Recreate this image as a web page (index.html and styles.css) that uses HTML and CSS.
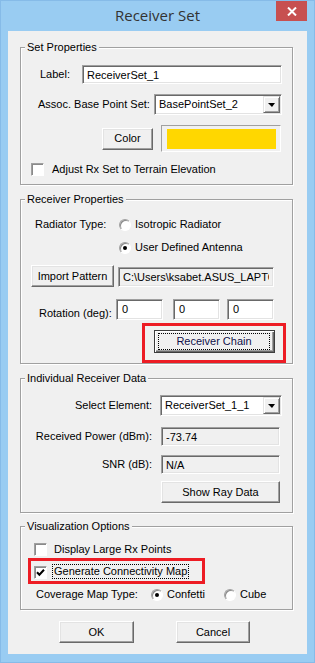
FILE: index.html
```html
<!DOCTYPE html>
<html lang="en">
<head>
<meta charset="UTF-8">
<meta name="viewport" content="width=device-width, initial-scale=1.0">
<title>Receiver Set</title>
<link rel="stylesheet" href="styles.css">
</head>
<body>
  <div class="window">
    <div class="titlebar">
      <span class="title">Receiver Set</span>
      <button class="close" title="Close">
        <svg width="10" height="9" viewBox="0 0 10 9"><path d="M1 0.5 L9 8.5 M9 0.5 L1 8.5" stroke="#fff" stroke-width="2"/></svg>
      </button>
    </div>

    <div class="client">
      <div class="group set-props">
        <div class="legend">Set Properties</div>
        <div class="row label-row">
          <span class="lbl lbl-name">Label:</span>
          <input class="edit name-edit" type="text" value="ReceiverSet_1">
        </div>
        <div class="row base-row">
          <span class="lbl lbl-base">Assoc. Base Point Set:</span>
          <div class="combo base-combo"><span class="combo-text">BasePointSet_2</span><span class="drop"></span></div>
        </div>
        <div class="row color-row">
          <button class="btn color-btn">Color</button>
          <div class="swatch"><div class="swatch-fill"></div></div>
        </div>
        <div class="row check-row terrain-row">
          <span class="check"></span>
          <span class="check-text">Adjust Rx Set to Terrain Elevation</span>
        </div>
      </div>

      <div class="group rx-props">
        <div class="legend">Receiver Properties</div>
        <div class="row radio-row type-row">
          <span class="lbl lbl-type">Radiator Type:</span>
          <span class="radio"></span>
          <span>Isotropic Radiator</span>
        </div>
        <div class="row radio-row user-row">
          <span class="radio on"></span>
          <span>User Defined Antenna</span>
        </div>
        <div class="row import-row">
          <button class="btn import-btn">Import Pattern</button>
          <input class="edit ro path-edit" type="text" value="C:\Users\ksabet.ASUS_LAPTOP\Documents\pattern.uan" readonly>
        </div>
        <div class="row rot-row">
          <span class="lbl lbl-rot">Rotation (deg):</span>
          <textarea class="edit rot-edit">0</textarea>
          <textarea class="edit rot-edit rot-mid">0</textarea>
          <textarea class="edit rot-edit rot-last">0</textarea>
        </div>
        <div class="row chain-row">
          <div class="mark chain-mark">
            <button class="btn default chain-btn"><span class="focus">Receiver Chain</span></button>
          </div>
        </div>
      </div>

      <div class="group rx-data">
        <div class="legend">Individual Receiver Data</div>
        <div class="row data-row sel-row">
          <span class="lbl lbl-right">Select Element:</span>
          <div class="combo elem-combo"><span class="combo-text">ReceiverSet_1_1</span><span class="drop"></span></div>
        </div>
        <div class="row data-row power-row">
          <span class="lbl lbl-right">Received Power (dBm):</span>
          <input class="edit ro data-edit" type="text" value="-73.74" readonly>
        </div>
        <div class="row data-row snr-row">
          <span class="lbl lbl-right">SNR (dB):</span>
          <input class="edit ro data-edit" type="text" value="N/A" readonly>
        </div>
        <div class="row ray-row">
          <button class="btn ray-btn">Show Ray Data</button>
        </div>
      </div>

      <div class="group vis-opts">
        <div class="legend">Visualization Options</div>
        <div class="row check-row large-row">
          <span class="check"></span>
          <span class="check-text">Display Large Rx Points</span>
        </div>
        <div class="row conn-mark">
          <span class="check on">
            <svg width="9" height="9" viewBox="0 0 9 9"><path d="M1 4.2 L3.4 6.8 L8 1.8" fill="none" stroke="#000" stroke-width="2"/></svg>
          </span>
          <span class="check-text focus-text">Generate Connectivity Map</span>
        </div>
        <div class="row radio-row map-row">
          <span class="lbl lbl-map">Coverage Map Type:</span>
          <span class="opt opt-confetti"><span class="radio on"></span><span>Confetti</span></span>
          <span class="opt"><span class="radio"></span><span>Cube</span></span>
        </div>
      </div>

      <div class="row actions">
        <button class="btn ok-btn">OK</button>
        <button class="btn cancel-btn">Cancel</button>
      </div>
    </div>
  </div>
</body>
</html>
```

FILE: styles.css
```css
body {
  margin: 0;
  font-family: "Liberation Sans", Arial, sans-serif;
  font-size: 11px;
  line-height: 13px;
  color: #000;
}
.window {
  width: 315px;
  height: 663px;
  box-sizing: border-box;
  padding: 0 8px 9px;
  background: #99ccf2;
  box-shadow: inset 0 0 0 1px #86bbe8;
  display: flex;
  flex-direction: column;
}
.titlebar {
  height: 31px;
  margin: 0 -8px;
  display: grid;
  grid-template-columns: 1fr auto 1fr;
}
.title {
  grid-column: 2;
  font-family: "Open Sans", "Noto Sans", sans-serif;
  font-size: 15px;
  line-height: 30px;
  color: #333;
}
.close {
  grid-column: 3;
  justify-self: end;
  margin: 1px 8px 0 0;
  width: 31px;
  height: 20px;
  padding: 0;
  border: 0;
  background: #c75050;
  display: flex;
  align-items: center;
  justify-content: center;
}
.client {
  flex: 1;
  background: #f0f0f0;
  padding-left: 12px;
}

/* group boxes */
.group {
  width: 273px;
  box-sizing: border-box;
  border: 1px solid #a0a0a0;
  box-shadow: inset 1px 1px 0 #fff, 1px 1px 0 #fff;
}
.legend {
  width: max-content;
  margin: -7px 0 0 4px;
  padding: 0 2px;
  background: #f0f0f0;
}
.set-props { margin-top: 16px; padding-bottom: 8px; }
.rx-props { margin-top: 14px; padding-bottom: 10px; }
.rx-data { margin-top: 14px; padding-bottom: 9px; }
.vis-opts { margin-top: 13px; padding-bottom: 8px; }

.row {
  display: flex;
  align-items: center;
}
.lbl { flex: none; }

/* controls */
.edit {
  box-sizing: border-box;
  margin: 0;
  padding: 0 4px;
  font: inherit;
  color: #000;
  background: #fff;
  border: 1px solid;
  border-color: #a0a0a0 #fff #fff #a0a0a0;
  box-shadow: inset 1px 1px 0 #696969, inset -1px -1px 0 #e3e3e3;
  outline: none;
}
.edit.ro { background: #f0f0f0; }
textarea.edit {
  resize: none;
  overflow: hidden;
  padding: 3px 5px;
}
.btn {
  box-sizing: border-box;
  margin: 0;
  padding: 0;
  font: inherit;
  color: #000;
  background: #f0f0f0;
  border: 1px solid;
  border-color: #fff #696969 #696969 #fff;
  box-shadow: inset -1px -1px 0 #a0a0a0, inset 1px 1px 0 #e3e3e3;
  display: flex;
  align-items: center;
  justify-content: center;
}
.btn.default {
  border: 1px solid #3c3c3c;
  box-shadow: inset 1px 1px 0 #fff, inset -1px -1px 0 #696969, inset -2px -2px 0 #a0a0a0;
  align-items: stretch;
}
.focus {
  flex: 1;
  margin: 2px 4px 2px 3px;
  border: 1px dotted #000;
  display: flex;
  align-items: center;
  justify-content: center;
  color: #10104a;
}
.combo {
  box-sizing: border-box;
  display: flex;
  align-items: stretch;
  background: #fff;
  border: 1px solid;
  border-color: #a0a0a0 #fff #fff #a0a0a0;
  box-shadow: inset 1px 1px 0 #696969, inset -1px -1px 0 #e3e3e3;
  padding: 1px 1px 1px 2px;
}
.combo-text {
  flex: 1;
  display: flex;
  align-items: center;
  padding-left: 2px;
}
.drop {
  width: 17px;
  box-sizing: border-box;
  background: #f0f0f0;
  border: 1px solid;
  border-color: #e3e3e3 #696969 #696969 #e3e3e3;
  box-shadow: inset 1px 1px 0 #fff, inset -1px -1px 0 #a0a0a0;
  display: flex;
  align-items: center;
  justify-content: center;
}
.drop::after {
  content: "";
  border-left: 4px solid transparent;
  border-right: 3px solid transparent;
  border-top: 4px solid #000;
}
.check {
  flex: none;
  width: 13px;
  height: 13px;
  box-sizing: border-box;
  background: #fff;
  border: 1px solid;
  border-color: #a0a0a0 #fff #fff #a0a0a0;
  box-shadow: inset 1px 1px 0 #8a8a8a;
  display: flex;
  align-items: center;
  justify-content: center;
}
.radio {
  flex: none;
  width: 12px;
  height: 12px;
  box-sizing: border-box;
  border-radius: 50%;
  background: #fff;
  border: 1px solid;
  border-color: #a0a0a0 #fff #fff #a0a0a0;
  box-shadow: inset 1px 1px 0 #8a8a8a;
  margin-right: 4px;
  display: flex;
  align-items: center;
  justify-content: center;
}
.radio.on::after {
  content: "";
  width: 4px;
  height: 4px;
  border-radius: 50%;
  background: #000;
}

/* set properties */
.label-row { margin-top: 11px; height: 19px; }
.lbl-name { margin-left: 19px; width: 42px; }
.name-edit { width: 200px; height: 19px; }
.base-row { margin-top: 10px; height: 21px; }
.lbl-base { margin-left: 17px; width: 116px; }
.base-combo { width: 128px; height: 21px; }
.color-row { margin-top: 10px; height: 27px; }
.color-btn { margin-left: 81px; width: 51px; height: 22px; }
.swatch {
  margin-left: 8px;
  width: 120px;
  height: 27px;
  box-sizing: border-box;
  border: 1px solid;
  border-color: #a0a0a0 #fff #fff #a0a0a0;
  padding: 3px 4px 2px 5px;
}
.swatch-fill { height: 100%; background: #ffd700; }
.check-row { height: 13px; }
.terrain-row { margin-top: 11px; }
.terrain-row .check { margin-left: 10px; margin-right: 8px; }

/* receiver properties */
.radio-row { height: 13px; }
.type-row { margin-top: 12px; }
.lbl-type { margin-left: 14px; width: 84px; }
.user-row { margin-top: 10px; }
.user-row .radio { margin-left: 98px; }
.import-row { margin-top: 11px; height: 22px; align-items: flex-end; }
.import-btn { margin-left: 10px; width: 83px; height: 22px; }
.path-edit { margin-left: 4px; width: 156px; height: 20px; }
.rot-row { margin-top: 12px; height: 21px; align-items: flex-end; }
.lbl-rot { margin-left: 18px; width: 77px; }
.rot-edit { width: 47px; height: 21px; }
.rot-mid { margin-left: 10px; }
.rot-last { margin-left: 7px; }
.chain-row { margin-top: 10px; height: 23px; }
.chain-mark { margin-left: 133px; }
.chain-btn { width: 121px; height: 23px; }
.mark { position: relative; }
.chain-mark::after {
  content: "";
  position: absolute;
  left: -12px;
  top: -7px;
  right: -11px;
  bottom: -10px;
  border: 3px solid #ed1c24;
}

/* individual receiver data */
.lbl-right { width: 131px; text-align: right; }
.sel-row { margin-top: 10px; height: 21px; }
.elem-combo { margin-left: 8px; width: 122px; height: 21px; }
.power-row { margin-top: 11px; height: 19px; }
.snr-row { margin-top: 9px; height: 19px; }
.data-edit { margin-left: 9px; width: 119px; height: 19px; }
.ray-row { margin-top: 7px; }
.ray-btn { margin-left: 140px; width: 119px; height: 22px; }

/* visualization options */
.large-row { margin-top: 10px; }
.large-row .check { margin-left: 13px; margin-right: 7px; }
.conn-mark {
  margin: 2px 0 0 7px;
  width: 177px;
  height: 26px;
  box-sizing: border-box;
  border: 3px solid #ed1c24;
  padding-left: 3px;
}
.conn-mark .check { margin-right: 5px; margin-top: 2px; }
.focus-text {
  border: 1px dotted #000;
  padding: 0 1px;
  margin-top: 1px;
}
.map-row { margin-top: 4px; }
.lbl-map { margin-left: 15px; width: 115px; }
.opt { display: flex; align-items: center; }
.opt-confetti { width: 73px; }

/* dialog buttons */
.actions { margin-top: 11px; }
.ok-btn { margin-left: 39px; width: 75px; height: 22px; }
.cancel-btn { margin-left: 42px; width: 74px; height: 22px; }
```
